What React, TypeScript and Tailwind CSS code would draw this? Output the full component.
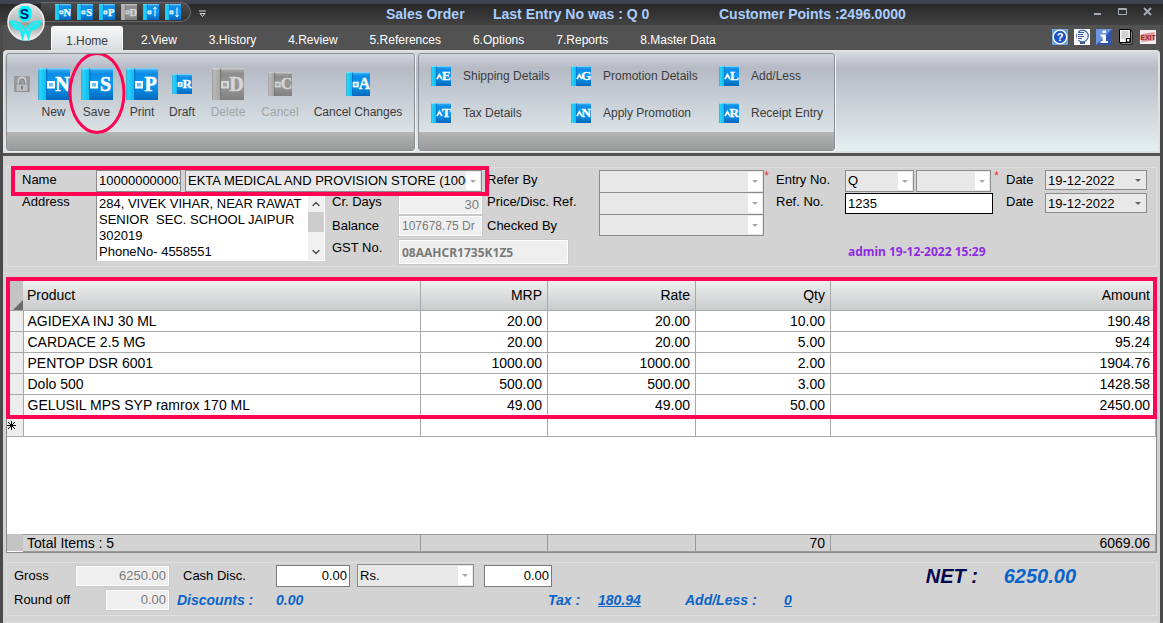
import type { ReactNode } from "react"
import { ChevronDown, ChevronUp } from "lucide-react"

type Tone = "blue" | "gray"

const tabs = ["1.Home", "2.View", "3.History", "4.Review", "5.References", "6.Options", "7.Reports", "8.Master Data"]

const quickItems: { mark: string; tone: Tone; label: string }[] = [
  { mark: "N", tone: "blue", label: "New" },
  { mark: "S", tone: "blue", label: "Save" },
  { mark: "P", tone: "blue", label: "Print" },
  { mark: "D", tone: "gray", label: "Delete" },
  { mark: "up", tone: "blue", label: "Previous" },
  { mark: "down", tone: "blue", label: "Next" },
]

const detailItems = [
  { mark: "E", label: "Shipping Details" },
  { mark: "G", label: "Promotion Details" },
  { mark: "L", label: "Add/Less" },
  { mark: "T", label: "Tax Details" },
  { mark: "N", label: "Apply Promotion" },
  { mark: "R", label: "Receipt Entry" },
]

const rows = [
  ["AGIDEXA INJ 30 ML", "20.00", "20.00", "10.00", "190.48"],
  ["CARDACE 2.5 MG", "20.00", "20.00", "5.00", "95.24"],
  ["PENTOP DSR 6001", "1000.00", "1000.00", "2.00", "1904.76"],
  ["Dolo 500", "500.00", "500.00", "3.00", "1428.58"],
  ["GELUSIL MPS SYP ramrox 170 ML", "49.00", "49.00", "50.00", "2450.00"],
]

/* Book-shaped tile with a shortcut key on its cover */
function Tile({ mark, tone = "blue", caret = false, letter = 21, className }: {
  mark: string
  tone?: Tone
  caret?: boolean
  letter?: number
  className: string
}) {
  const gray = tone === "gray"
  const arrow = mark === "up" || mark === "down"
  const ink = gray ? "#d6d6d6" : "#ffffff"
  return (
    <svg viewBox="0 0 32 32" className={className} aria-hidden="true">
      <defs>
        <linearGradient id={`cover-${tone}`} x1="0" y1="0" x2="0" y2="1">
          <stop offset="0" stopColor={gray ? "#b0b0b0" : "#3db4f4"} />
          <stop offset="0.18" stopColor={gray ? "#8c8c8c" : "#0a8be6"} />
          <stop offset="0.5" stopColor={gray ? "#9a9a9a" : "#0a9cf4"} />
          <stop offset="1" stopColor={gray ? "#808080" : "#0568bd"} />
        </linearGradient>
        <linearGradient id={`spine-${tone}`} x1="0" y1="0" x2="1" y2="0">
          <stop offset="0" stopColor={gray ? "#9a9a9a" : "#4f9fbe"} />
          <stop offset="0.25" stopColor={gray ? "#b9b9b9" : "#25d4fb"} />
          <stop offset="1" stopColor={gray ? "#a5a5a5" : "#12b9f2"} />
        </linearGradient>
      </defs>
      <rect width="32" height="32" fill={`url(#cover-${tone})`} />
      <rect width="8" height="32" fill={`url(#spine-${tone})`} />
      <rect x="8" width="1.4" height="32" fill={gray ? "#7a7a7a" : "#0574c8"} />
      <rect width="32" height="1.6" fill="#ffffff" opacity="0.35" />
      {caret ? (
        <path d="M9.500 21l4-7 4 7" fill="none" stroke={ink} strokeWidth="2.8" />
      ) : (
        <rect x="10" y="14" width="6" height="5.5" fill={gray ? "#a5a5a5" : "#69bdf5"} stroke={ink} strokeWidth="2" />
      )}
      {arrow && (
        <path
          d={mark === "up" ? "M24 25V7M21 10l3-4 3 4" : "M24 7v18M21 22l3 4 3-4"}
          fill="none"
          stroke={ink}
          strokeWidth="2"
        />
      )}
      {!arrow && (
        <text
          x="24.5"
          y="23"
          textAnchor="middle"
          fontFamily="Liberation Serif, serif"
          fontWeight="bold"
          fontSize={letter}
          fill={ink}
          stroke={ink}
          strokeWidth="0.5"
        >
          {mark}
        </text>
      )}
    </svg>
  )
}

function Orb() {
  return (
    <svg viewBox="0 0 38 38" className="absolute left-[7px] top-[3px] z-10 h-[38px] w-[38px]" aria-hidden="true">
      <defs>
        <linearGradient id="orb" x1="0" y1="0" x2="0" y2="1">
          <stop offset="0" stopColor="#e4e4e4" />
          <stop offset="0.48" stopColor="#bdbdbd" />
          <stop offset="0.55" stopColor="#9b9b9b" />
          <stop offset="1" stopColor="#f4f4f4" />
        </linearGradient>
      </defs>
      <circle cx="19" cy="19" r="18" fill="url(#orb)" stroke="#ececec" strokeWidth="1.6" />
      <path d="M14.500 3h7l3 4v7l-4 4.500h-5l-4-4.500V7z" fill="#00f6f6" />
      {/* leaves */}
      <path d="M2.500 17.500c6-.5 12 1.500 14 6l-1 2.500c-1 1-2 1.500-3 1.500-5-.5-9-4-10-10z" fill="#19eef5" />
      <path d="M34.500 17.500c-6-.5-12 1.500-14 6l1 2.500c1 1 2 1.500 3 1.500 5-.5 9-4 10-10z" fill="#19eef5" />
      <path d="M6 19.500c4 1 6 2.500 8 5.500M31 19.500c-4 1-6 2.500-8 5.500" fill="none" stroke="#b4bcbd" strokeWidth="1" />
      <path d="M13.500 25l2 9 3-9 3 9 2-9" fill="none" stroke="#19eef5" strokeWidth="2.4" />
      <text x="17.500" y="15.500" textAnchor="middle" fontFamily="Liberation Sans, sans-serif" fontWeight="bold" fontSize="14" fill="#06107c">
        S
      </text>
    </svg>
  )
}

function LockIcon() {
  return (
    <svg viewBox="0 0 16 16" className="mr-0.5 mt-2 h-4 w-4" aria-hidden="true">
      <rect width="16" height="16" fill="#999b9f" />
      <path d="M4.500 8V5a3.500 3.500 0 017 0v3" fill="none" stroke="#c9cbcd" strokeWidth="2" />
      <path d="M5.500 8V5.500a2.500 2.500 0 015 0V8" fill="none" stroke="#77797c" strokeWidth="0.7" />
      <rect x="2" y="8" width="12" height="7.500" fill="#bcbec0" stroke="#87898c" strokeWidth="0.8" />
      <path d="M8 9.500v4M7 11.500h2" stroke="#75777a" strokeWidth="1.4" />
    </svg>
  )
}

function HeaderIcons() {
  return (
    <div className="ml-auto flex gap-1.5 pr-1">
      <button aria-label="Help">
        <svg viewBox="0 0 16 16" className="block h-4 w-4">
          <rect width="16" height="16" fill="#6ba3da" />
          <circle cx="8" cy="8" r="6.800" fill="#1d56c4" stroke="#ffffff" strokeWidth="1.3" />
          <text x="8" y="12" textAnchor="middle" fontFamily="Liberation Sans, sans-serif" fontWeight="bold" fontSize="11" fill="#fff">?</text>
        </svg>
      </button>
      <button aria-label="Notes">
        <svg viewBox="0 0 16 16" className="block h-4 w-4">
          <rect width="16" height="16" fill="#fff" />
          <circle cx="8.500" cy="7" r="5.800" fill="#e6eefb" stroke="#48689c" strokeWidth="1.3" />
          <path d="M3 3h7v8H3z" fill="#ffffff" />
          <path d="M4 3.500h6M4 5.500h5M4 7.500h6M4 9.500h4" stroke="#3f5f94" strokeWidth="1" />
          <path d="M6 13h5v2H6z" fill="#3f5f94" />
        </svg>
      </button>
      <button aria-label="Information">
        <svg viewBox="0 0 16 16" className="block h-4 w-4">
          <rect width="16" height="16" fill="#2f55ae" />
          <path d="M0 0h16L0 16z" fill="#6d94e0" />
          <path d="M6.500 1.500h3.500v2.500H6.500zM4.500 5.500H10v6.500h2v2H4.500v-2h2V7.500h-2z" fill="#fff" />
        </svg>
      </button>
      <button aria-label="Report">
        <svg viewBox="0 0 16 16" className="block h-4 w-4">
          <path d="M3 2h11v13H3z" fill="#fff" stroke="#000" />
          <path d="M1.500.5h11v13h-11z" fill="#f4f4f4" stroke="#000" />
          <path d="M3.500 3h7M3.500 5h7M3.500 7h7M3.500 9h4" stroke="#9a9a9a" strokeWidth="0.8" />
          <path d="M8.500 9.500h3.500v3.500H8.500z" fill="#fff" stroke="#000" strokeWidth="1.2" />
        </svg>
      </button>
      <button aria-label="Exit">
        <svg viewBox="0 0 16 16" className="block h-4 w-4">
          <rect y="1" width="16" height="14" fill="#f4eeee" />
          <path d="M1.500 5l13-2v8.500l-13 1.500z" fill="#dc9a9a" />
          <text x="8" y="11" textAnchor="middle" fontFamily="Liberation Sans, sans-serif" fontWeight="bold" fontSize="7" fill="#a01c22">
            EXIT
          </text>
        </svg>
      </button>
    </div>
  )
}

function RibbonButton({ mark, label, width, size = "h-8 w-8", letter, tone = "blue", children }: {
  mark: string
  label: string
  width: string
  size?: string
  letter?: number
  tone?: Tone
  children?: ReactNode
}) {
  return (
    <button className={`relative flex flex-col items-center ${width}`} disabled={tone === "gray"}>
      <span className="flex h-8 items-center">
        <Tile mark={mark} tone={tone} letter={letter} className={size} />
      </span>
      <span className={`mt-1 whitespace-nowrap text-xs ${tone === "gray" ? "text-[#a3a6a8]" : "text-[#3c3c3c]"}`}>{label}</span>
      {children}
    </button>
  )
}

function RibbonGroup({ children }: { children: ReactNode }) {
  return (
    <div className="flex flex-col overflow-hidden rounded-[3px] border border-[#8c8f92] shadow-[1px_1px_0_#f2f4f4]">
      <div className="h-[79px]">{children}</div>
      <div className="h-[18px] bg-linear-to-b from-[#b3b6b5] to-[#989a99]" />
    </div>
  )
}

function Combo({ label, id, value = "", arrow = "light", className = "" }: {
  label: string
  id: string
  value?: string
  arrow?: "light" | "dark"
  className?: string
}) {
  return (
    <div className={`relative border border-[#8b8b8b] bg-[#e8e8e8] ${className}`}>
      <select id={id} aria-label={label} defaultValue={value} className="block h-full w-full appearance-none px-0.5 text-[13px] text-black outline-none">
        <option>{value}</option>
      </select>
      <span className={`pointer-events-none absolute inset-y-px right-px flex w-3.5 items-center justify-center ${arrow === "light" ? "bg-white text-[#a8a8a8]" : "text-[#666666]"}`}>
        <svg viewBox="0 0 6 3" className="h-[3px] w-1.5"><path d="M0 0h6L3 3z" fill="currentColor" /></svg>
      </span>
    </div>
  )
}

function ReadOnly({ id, value, className }: { id: string; value: string; className: string }) {
  return (
    <input id={id} readOnly value={value} className={`min-w-0 border border-white bg-[#efefef] px-0.5 text-[#7a7a7a] outline outline-[#c8c8c8] ${className}`} />
  )
}

const label = "whitespace-nowrap text-[13px] leading-5"
const boldBlue = "text-sm font-bold italic text-[#0b64c8]"

export default function App() {
  return (
    <div className="flex min-h-screen flex-col border-x-[3px] border-[#4a4a4a] bg-[#525252] font-['Liberation_Sans',Arial,sans-serif] text-black">
      {/* Title bar */}
      <header className="relative -mx-[3px] flex h-[25px] items-center border-b-2 border-b-[#414141] border-t-4 border-t-[#40424f] bg-linear-to-b from-[#282828] to-[#404040] px-[3px]">
        <div className="-mt-1 ml-[38px] flex h-5 w-[150px] items-center gap-1.5 rounded-r-full border border-l-0 border-[#6a6a6a] bg-linear-to-b from-[#4c4c4c] to-[#333333] pl-3.5">
          {quickItems.map((item) => (
            <button key={item.mark} aria-label={item.label} disabled={item.tone === "gray"}>
              <Tile mark={item.mark} tone={item.tone} className="h-4 w-4" />
            </button>
          ))}
        </div>
        <button aria-label="Customize" className="ml-2">
          <svg viewBox="0 0 7 8" className="h-2 w-[7px]"><path d="M0 1h7M1 3.500h5L3.500 6.500z" fill="none" stroke="#d8d8d8" /></svg>
        </button>
        <h1 className="ml-[180px] flex whitespace-pre text-sm font-bold text-[#a9cdff]">
          <span className="w-[107px]">Sales Order</span>
          <span className="w-[226px]">Last Entry No was : Q 0</span>
          <span>Customer Points :2496.0000</span>
        </h1>
        <div className="-mt-1 ml-auto flex items-center gap-4 pr-2">
          <button aria-label="Minimize"><svg viewBox="0 0 9 9" className="h-[9px] w-[9px]"><path d="M1 7h7" stroke="#a4acb8" strokeWidth="2" /></svg></button>
          <button aria-label="Maximize"><svg viewBox="0 0 9 9" className="h-[9px] w-[9px]"><path d="M.5 1.500h8v6h-8zM.5 2.500h8" fill="none" stroke="#a4acb8" /></svg></button>
          <button aria-label="Close"><svg viewBox="0 0 9 9" className="h-[9px] w-[9px]"><path d="M1 1l7 7M8 1L1 8" stroke="#a4acb8" strokeWidth="2" /></svg></button>
        </div>
      </header>
      <Orb />

      <nav className="flex h-[25px] items-end pl-12">
        {tabs.map((tab, i) => (
          <button
            key={tab}
            className={`h-6 whitespace-nowrap pt-1 text-xs ${i === 0 ? "mr-0.5 rounded-t-[3px] border border-b-0 border-white bg-linear-to-b from-[#f6f7f8] to-[#d9dde2] px-3.5 text-[#3c3c3c]" : "px-4 text-white"}`}
          >
            {tab}
          </button>
        ))}
        <div className="ml-auto pb-[5px]">
          <HeaderIcons />
        </div>
      </nav>

      {/* Ribbon */}
      <section className="flex h-[103px] gap-[3px] rounded-t-[4px] border-2 border-[#dde1e4] bg-linear-to-b from-[#d5d9e0] from-0% via-[#b5bac5] via-16% to-[#e6eff0] to-100% pl-px pt-px">
        <RibbonGroup>
          <div className="flex pl-[7px] pt-3.5">
            <LockIcon />
            <RibbonButton mark="N" label="New" width="w-[43px]" letter={20} />
            <RibbonButton mark="S" label="Save" width="w-[43px]" letter={20}>
              <span className="pointer-events-none absolute -top-4 left-1/2 z-10 h-[82px] w-[57px] -translate-x-1/2 rounded-[50%] border-[3px] border-[#ff0454]" />
            </RibbonButton>
            <RibbonButton mark="P" label="Print" width="w-[48px]" letter={20} />
            <RibbonButton mark="R" label="Draft" width="w-[32px]" size="h-5 w-5" />
            <RibbonButton mark="D" label="Delete" width="w-[60px]" letter={20} tone="gray" />
            <RibbonButton mark="C" label="Cancel" width="w-[44px]" size="h-6 w-6" tone="gray" />
            <RibbonButton mark="A" label="Cancel Changes" width="w-[112px]" size="h-6 w-6" />
          </div>
        </RibbonGroup>
        <RibbonGroup>
          <div className="grid grid-cols-[140px_148px_115px] gap-y-[17px] pl-3 pt-3">
            {detailItems.map((item) => (
              <button key={item.label} className="flex h-5 items-center gap-3 whitespace-nowrap text-xs text-[#3c3c3c]">
                <Tile mark={item.mark} caret className="h-5 w-5" />
                {item.label}
              </button>
            ))}
          </div>
        </RibbonGroup>
      </section>

      <main className="mt-[3px] flex-1 bg-[#d3d3d3] px-[3px]">
        {/* Customer and entry details */}
        <section className="mt-[11px] border border-[#dedede] pl-[15px] pr-[9px] pt-0.5">
          <div className="relative grid grid-cols-[74px_minmax(229px,1fr)_74px_83px_117px_165px_81px_148px_52px_102px] grid-rows-[22px_22px_22px_30px]">
            <label htmlFor="code" className={label}>Name</label>
            <div className="col-span-3 flex gap-1">
              <input id="code" defaultValue="100000000003" className="w-[85px] border border-[#8b8b8b] bg-[#efefef] pl-0.5 text-[13px] outline-none" />
              <Combo id="customer" label="Customer" value="EKTA MEDICAL AND PROVISION STORE (1000000)" className="min-w-0 flex-1" />
            </div>
            <label htmlFor="refer" className={`pl-[5px] ${label}`}>Refer By</label>
            <Combo id="refer" label="Refer By" className="-mb-px" />
            <label htmlFor="entry" className={`pl-3 ${label}`}>Entry No.</label>
            <div className="flex gap-0.5 pr-0.5">
              <Combo id="entry" label="Entry series" value="Q" className="w-[69px]" />
              <Combo id="entryNo" label="Entry number" className="flex-1" />
            </div>
            <label htmlFor="date1" className={`pl-[13px] ${label}`}>Date</label>
            <Combo id="date1" label="Entry date" value="19-12-2022" arrow="dark" className="h-5" />

            <label htmlFor="address" className={label}>Address</label>
            <div className="row-span-3 mb-[5px] flex border border-[#8b8b8b] border-b-white border-r-white bg-white pt-[3px]">
              <textarea
                id="address"
                className="min-w-0 flex-1 resize-none overflow-hidden whitespace-pre pl-0.5 text-[13px] leading-4 outline-none"
                defaultValue={"284, VIVEK VIHAR, NEAR RAWAT\nSENIOR  SEC. SCHOOL JAIPUR\n302019\nPhoneNo- 4558551"}
              />
              <div className="flex w-4 flex-col items-center bg-[#f0f0f0]">
                <ChevronUp className="h-4 w-3" color="#505050" strokeWidth={3} />
                <span className="h-5 w-4 bg-[#cdcdcd]" />
                <ChevronDown className="mt-auto h-4 w-3" color="#505050" strokeWidth={3} />
              </div>
            </div>
            <label htmlFor="days" className={`pl-[7px] ${label}`}>Cr. Days</label>
            <ReadOnly id="days" value="30" className="mt-1 h-[18px] text-right text-[13px]" />
            <label htmlFor="price" className={`pl-[5px] ${label}`}>Price/Disc. Ref.</label>
            <Combo id="price" label="Price/Disc. Ref." className="-mb-px" />
            <label htmlFor="ref" className={`pl-3 ${label}`}>Ref. No.</label>
            <input id="ref" defaultValue="1235" className="mt-px border border-black bg-white px-0.5 text-[13px] outline-none" />
            <label htmlFor="date2" className={`pl-[13px] ${label}`}>Date</label>
            <Combo id="date2" label="Reference date" value="19-12-2022" arrow="dark" className="mt-px h-5" />

            <label htmlFor="balance" className={`col-start-3 pl-[7px] pt-0.5 ${label}`}>Balance</label>
            <ReadOnly id="balance" value="107678.75 Dr" className="mt-0.5 h-5 text-xs" />
            <label htmlFor="checked" className={`pl-[5px] pt-0.5 ${label}`}>Checked By</label>
            <Combo id="checked" label="Checked By" />

            <label htmlFor="gst" className={`col-start-3 row-start-4 pl-[7px] pt-0.5 ${label}`}>GST No.</label>
            <ReadOnly
              id="gst"
              value="08AAHCR1735K1Z5"
              className="col-span-2 col-start-4 row-start-4 mr-[31px] mt-1 h-6 font-['Noto_Sans',sans-serif] text-xs font-bold"
            />
            <p className="col-span-2 col-start-8 row-start-4 whitespace-nowrap pl-[3px] pt-2 font-['Noto_Sans',sans-serif] text-xs font-bold text-[#8e2be2]">
              admin 19-12-2022 15:29
            </p>

            <span className="pointer-events-none absolute -left-[11px] -top-1 h-[30px] w-[478px] border-4 border-[#ff0454]" />
            <span className="absolute right-[378px] top-0 text-xs leading-3 text-[#f03030]">*</span>
            <span className="absolute right-[148px] top-0 text-xs leading-3 text-[#f03030]">*</span>
          </div>
        </section>

        {/* Item grid */}
        <section className="relative mt-3 border border-[#8b8b8b] bg-white">
          <table className="w-full table-fixed border-collapse text-sm leading-5">
            <colgroup>
              <col className="w-4" />
              <col />
              <col className="w-[127px]" />
              <col className="w-[148px]" />
              <col className="w-[135px]" />
              <col className="w-[325px]" />
            </colgroup>
            <thead>
              <tr className="h-[30px] bg-linear-to-b from-[#eff2f1] to-[#c9cacc]">
                <th className="border-b border-[#a0a0a0] bg-[#c4c4c4] p-0 align-bottom">
                  <svg viewBox="0 0 10 10" className="ml-auto h-2.5 w-2.5"><path d="M10 0v10H0z" fill="#6a6a6a" /></svg>
                </th>
                {["Product", "MRP", "Rate", "Qty", "Amount"].map((h, i) => (
                  <th key={h} className={`border-b border-r border-[#a9a9a9] font-normal ${i === 0 ? "pl-1 text-left" : "pr-[5px] text-right"}`}>{h}</th>
                ))}
              </tr>
            </thead>
            <tbody>
              {rows.map((row) => (
                <tr key={row[0]} className="h-[21px]">
                  <td className="border border-l-0 border-[#a9a9a9] bg-[#ededed] p-0" />
                  {row.map((cell, i) => (
                    <td key={i} className={`border border-[#a9a9a9] py-0 ${i === 0 ? "pl-1" : "pr-[5px] text-right"}`}>{cell}</td>
                  ))}
                </tr>
              ))}
              <tr className="h-[21px]">
                <td className="border border-l-0 border-[#a9a9a9] bg-[#ededed] p-0">
                  <svg viewBox="0 0 9 9" className="h-[9px] w-[9px]"><path d="M4.500 0v9M0 4.500h9M1 1l7 7M8 1L1 8" stroke="#000" /></svg>
                </td>
                {rows[0].map((_, i) => (
                  <td key={i} className="border border-[#a9a9a9]" />
                ))}
              </tr>
              <tr className="h-[98px]"><td colSpan={6} /></tr>
            </tbody>
            <tfoot>
              <tr className="h-[17px] bg-[#d3d3d3] leading-4">
                <td className="bg-[#c4c4c4] p-0" />
                <td className="border border-l-0 border-[#999999] py-0 pl-1">Total Items : 5</td>
                <td className="border border-[#999999]" />
                <td className="border border-[#999999]" />
                <td className="border border-[#999999] py-0 pr-[5px] text-right">70</td>
                <td className="border border-[#999999] py-0 pr-[5px] text-right">6069.06</td>
              </tr>
            </tfoot>
          </table>
          <span className="pointer-events-none absolute -inset-x-px -top-[3px] h-[142px] border-4 border-[#ff0454]" />
        </section>

        {/* Totals */}
        <section className="mt-[9px] border border-[#dedede] pb-1 pl-[7px]">
          <div className="flex h-[26px] items-center">
            <label htmlFor="gross" className={`w-[62px] ${label}`}>Gross</label>
            <ReadOnly id="gross" value="6250.00" className="h-5 w-[93px] text-right text-[13px]" />
            <label htmlFor="cash" className={`ml-3.5 w-[93px] ${label}`}>Cash Disc.</label>
            <input id="cash" defaultValue="0.00" className="h-[22px] w-[74px] border border-[#7a7a7a] bg-white px-0.5 text-right text-[13px] outline-none" />
            <Combo id="unit" label="Discount unit" value="Rs." className="ml-[7px] h-[23px] w-[117px]" />
            <input
              aria-label="Discount amount"
              defaultValue="0.00"
              className="ml-2.5 h-[22px] w-[68px] border border-[#7a7a7a] bg-white px-0.5 text-right text-[13px] outline-none"
            />
            <div className="ml-auto flex pr-20 text-xl font-bold italic">
              <span className="w-[78px] text-[#06064c]">NET :</span>
              <span className="text-[#0b64c8]">6250.00</span>
            </div>
          </div>
          <div className="flex h-[22px] items-center">
            <label htmlFor="round" className={`w-[92px] ${label}`}>Round off</label>
            <ReadOnly id="round" value="0.00" className="h-5 w-[63px] text-right text-[13px]" />
            <span className={`ml-2 w-[99px] ${boldBlue}`}>Discounts :</span>
            <span className={`w-[272px] ${boldBlue}`}>0.00</span>
            <span className={`w-[50px] ${boldBlue}`}>Tax :</span>
            <a href="#tax" className={`w-[87px] underline ${boldBlue}`}>180.94</a>
            <span className={`w-[99px] ${boldBlue}`}>Add/Less :</span>
            <a href="#addless" className={`underline ${boldBlue}`}>0</a>
          </div>
        </section>
        <div className="mt-1.5 border-t border-[#dedede]" />
      </main>
    </div>
  )
}
